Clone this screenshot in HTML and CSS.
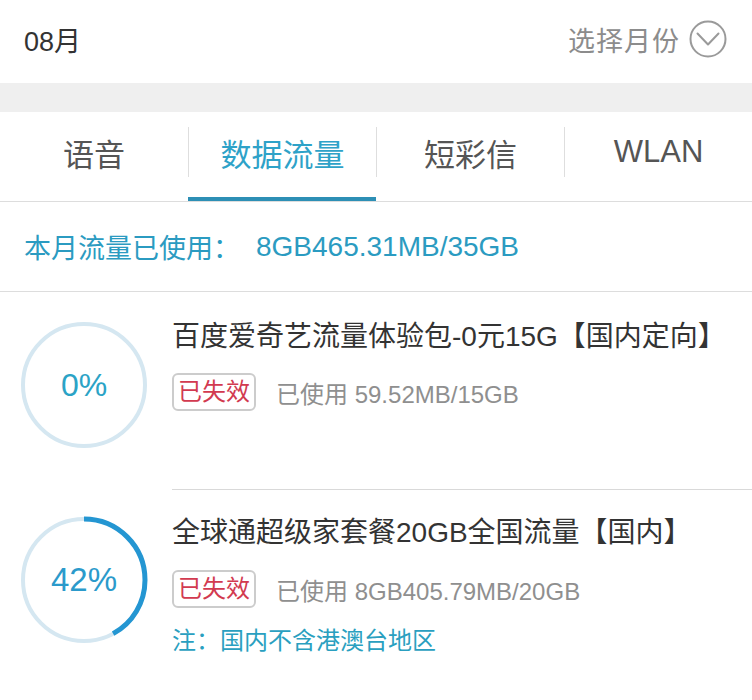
FILE: index.html
```html
<!DOCTYPE html>
<html lang="zh-CN">
<head>
<meta charset="utf-8">
<title>流量查询</title>
<link rel="stylesheet" href="styles.css">
</head>
<body>
<div class="page">
  <header class="header">
    <div class="month">08月</div>
    <div class="picker">
      <span class="picker-label">选择月份</span>
      <svg class="picker-icon" width="38" height="38" viewBox="0 0 38 38">
        <circle cx="19" cy="19" r="17.5" fill="none" stroke="#9a9a9a" stroke-width="2"/>
        <path d="M8.5 13.5 L19 24.5 L29.5 13.5" fill="none" stroke="#9a9a9a" stroke-width="2" stroke-linecap="round" stroke-linejoin="round"/>
      </svg>
    </div>
  </header>
  <div class="band"></div>
  <nav class="tabs">
    <div class="tab"><div class="tab-inner">语音</div><div class="tab-bar"></div></div>
    <div class="tab active"><div class="tab-inner">数据流量</div><div class="tab-bar"></div></div>
    <div class="tab"><div class="tab-inner">短彩信</div><div class="tab-bar"></div></div>
    <div class="tab"><div class="tab-inner latin">WLAN</div><div class="tab-bar"></div></div>
  </nav>
  <div class="summary">
    <span class="summary-label">本月流量已使用：</span><span class="summary-value">8GB465.31MB/35GB</span>
  </div>
  <div class="item">
    <div class="ring">
      <svg width="128" height="128" viewBox="0 0 128 128">
        <circle cx="64" cy="64" r="61" fill="none" stroke="#d5e7f1" stroke-width="4"/>
      </svg>
      <span class="ring-text">0%</span>
    </div>
    <div class="body body-first">
      <div class="title">百度爱奇艺流量体验包-0元15G【国内定向】</div>
      <div class="meta">
        <span class="badge">已失效</span>
        <span class="used">已使用 59.52MB/15GB</span>
      </div>
    </div>
  </div>
  <div class="item item-second">
    <div class="ring">
      <svg width="128" height="128" viewBox="0 0 128 128">
        <circle cx="64" cy="64" r="61" fill="none" stroke="#d5e7f1" stroke-width="4"/>
        <circle cx="64" cy="64" r="61" fill="none" stroke="#2496d2" stroke-width="5" stroke-dasharray="160.97 383.27" transform="rotate(-90 64 64)"/>
      </svg>
      <span class="ring-text ring-text-big">42%</span>
    </div>
    <div class="body body-second">
      <div class="title">全球通超级家套餐20GB全国流量【国内】</div>
      <div class="meta">
        <span class="badge">已失效</span>
        <span class="used">已使用 8GB405.79MB/20GB</span>
      </div>
      <div class="note">注：国内不含港澳台地区</div>
    </div>
  </div>
</div>
</body>
</html>
```
FILE: styles.css
```css
* { box-sizing: border-box; }
html, body {
  margin: 0;
  padding: 0;
  background: #ffffff;
}
body {
  font-family: "Liberation Sans", "Noto Sans CJK SC", sans-serif;
  color: #333333;
}
.page {
  width: 752px;
  overflow: hidden;
}
.header {
  height: 83px;
  display: flex;
  align-items: center;
  justify-content: space-between;
  padding: 0 25px 5px 24px;
}
.month {
  font-size: 27px;
  color: #333333;
}
.picker {
  display: flex;
  align-items: center;
  gap: 9px;
}
.picker-label {
  font-size: 27px;
  color: #8c8c8c;
  letter-spacing: 1px;
}
.picker-icon { display: block; }
.band {
  height: 29px;
  background: #efefef;
}
.tabs {
  display: grid;
  grid-template-columns: repeat(4, 1fr);
  height: 90px;
  border-bottom: 1px solid #dddddd;
}
.tab {
  display: flex;
  flex-direction: column;
}
.tab-inner {
  margin-top: 15px;
  height: 50px;
  display: flex;
  align-items: center;
  justify-content: center;
  font-size: 31px;
  color: #555555;
  border-left: 1px solid #dedede;
}
.tab:first-child .tab-inner { border-left: none; }
.tab.active .tab-inner { color: #2ea2c8; }
.tab-bar {
  margin-top: auto;
  height: 4px;
}
.tab.active .tab-bar { background: #2d8fb5; }
.summary {
  height: 90px;
  display: flex;
  align-items: center;
  padding-left: 24px;
  border-bottom: 1px solid #dddddd;
  color: #2b9bc1;
  font-size: 27px;
}
.summary-value {
  margin-left: 16px;
  font-size: 28px;
}
.item {
  display: flex;
}
.ring {
  flex: 0 0 172px;
  position: relative;
  height: 128px;
  margin-top: 29px;
  padding-left: 20px;
}
.item-second .ring { margin-top: 26px; }
.ring svg { display: block; }
.ring-text {
  position: absolute;
  left: 20px;
  top: 0;
  width: 128px;
  height: 128px;
  display: flex;
  align-items: center;
  justify-content: center;
  font-size: 32px;
  color: #2ba3c6;
}
.ring-text-big {
  font-size: 33px;
  color: #2b9acb;
}
.body {
  flex: 1;
}
.body-first {
  padding: 27px 0 78px;
  border-bottom: 1px solid #d9d9d9;
}
.body-second {
  padding: 25px 0 40px;
}
.title {
  font-size: 28px;
  line-height: 36px;
  color: #333333;
  white-space: nowrap;
}
.meta {
  display: flex;
  align-items: center;
  margin-top: 18px;
}
.body-second .meta { margin-top: 19px; }
.badge {
  height: 38px;
  padding: 0 4px;
  border: 2px solid #cccccc;
  border-radius: 6px;
  font-size: 24px;
  line-height: 34px;
  color: #d23a50;
}
.used {
  margin-left: 20px;
  font-size: 24px;
  color: #8f8f8f;
}
.note {
  margin-top: 15px;
  font-size: 24px;
  line-height: 36px;
  color: #2a9fc0;
}
```
